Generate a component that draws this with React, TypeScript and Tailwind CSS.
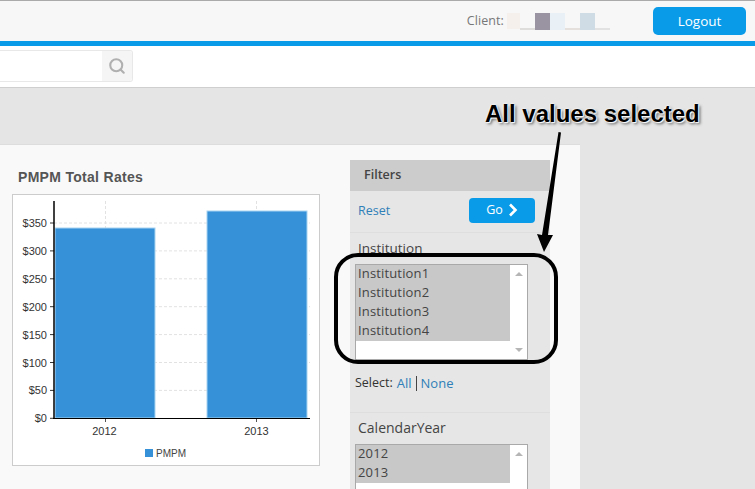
import { Search } from "lucide-react";

const ui = "font-['Open_Sans',sans-serif]";
const ticks = ["$350", "$300", "$250", "$200", "$150", "$100", "$50", "$0"];

function Chart() {
  // svg origin is at page (13,195)
  return (
    <svg width="306" height="270" className="block font-['Liberation_Sans',sans-serif]">
      {ticks.map((t, i) => {
        const y = 28 + i * 27.9;
        return (
          <g key={t}>
            {i < 7 && <line x1="41" x2="297" y1={y} y2={y} stroke="#e2e2e2" strokeDasharray="3 2" />}
            <line x1="37" x2="41" y1={y} y2={y} stroke="#333" />
            <text x="34" y={y + 4} textAnchor="end" fontSize="11" fill="#333">{t}</text>
          </g>
        );
      })}
      <line x1="92.5" x2="92.5" y1="6" y2="223" stroke="#e2e2e2" strokeDasharray="3 2" />
      <line x1="243.5" x2="243.5" y1="6" y2="223" stroke="#e2e2e2" strokeDasharray="3 2" />
      <rect x="42" y="33" width="100" height="190" fill="#3691d8" stroke="#a8d4f2" strokeWidth="1" />
      <rect x="194" y="16" width="100" height="207" fill="#3691d8" stroke="#a8d4f2" strokeWidth="1" />
      <line x1="41" x2="41" y1="6" y2="224" stroke="#000" strokeWidth="1.5" />
      <line x1="40" x2="297" y1="223.5" y2="223.5" stroke="#000" />
      <line x1="92.5" x2="92.5" y1="224" y2="227" stroke="#555" />
      <line x1="243.5" x2="243.5" y1="224" y2="227" stroke="#555" />
      <text x="91.5" y="240" textAnchor="middle" fontSize="11" fill="#333">2012</text>
      <text x="243.5" y="240" textAnchor="middle" fontSize="11" fill="#333">2013</text>
      <rect x="132" y="254" width="8" height="8" fill="#3691d8" />
      <text x="143" y="262" fontSize="10" fill="#444">PMPM</text>
    </svg>
  );
}

function Listbox({ items, height }: { items: string[]; height: string }) {
  return (
    <div className={`flex ${height} w-[173px] border border-[#a9a9a9] bg-white`}>
      <div className="flex-1">
        {items.map((item) => (
          <div key={item} className={`h-[19px] bg-[#c8c8c8] pb-[2px] pl-[2px] text-[13px] leading-[17px] tracking-[0.15px] text-[#444] ${ui}`}>
            {item}
          </div>
        ))}
      </div>
      <div className="flex w-[17px] flex-col items-center justify-between py-[7px]">
        <span className="h-0 w-0 border-x-[4px] border-b-[4px] border-x-transparent border-b-[#b5b5b5]" />
        <span className="h-0 w-0 border-x-[4px] border-t-[4px] border-x-transparent border-t-[#b5b5b5]" />
      </div>
    </div>
  );
}

function FilterPanel() {
  return (
    <div className={`mt-[15px] w-[200px] bg-[#e6e6e6] ${ui}`}>
      <div className="h-[31px] bg-[#cccccc] pl-[14px] text-[12.5px] font-semibold leading-[29px] text-[#444]">Filters</div>
      <div className="flex h-[42px] items-center justify-between border-b border-[#dedede] pl-[8px] pr-[15px] pb-[3px]">
        <span className="mt-[2px] text-[12.5px] text-[#2f7fb8]">Reset</span>
        <button className="flex h-[25px] w-[66px] items-center justify-center gap-[5px] rounded-[4px] bg-[#0a9be8] text-[12.5px] text-white">
          Go
          <svg width="10" height="14" viewBox="0 0 10 14" fill="none" stroke="#fff" strokeWidth="2.6">
            <path d="M2 1.5 7.5 7 2 12.5" />
          </svg>
        </button>
      </div>
      <div className="h-[180px] border-b border-[#dedede]">
        <div className="pl-[8px] pt-[5px] text-[13.5px] leading-[20px] text-[#444]">Institution</div>
        <div className="ml-[5px] mt-[6px]">
          <Listbox items={["Institution1", "Institution2", "Institution3", "Institution4"]} height="h-[96px]" />
        </div>
        <div className="ml-[5px] mt-[13px] flex items-center text-[12.5px] leading-[20px] text-[#333]">
          Select:
          <span className="ml-[4px] text-[13px] text-[#2f7fb8]">All</span>
          <span className="mx-[4px] h-[15px] w-px bg-[#444]" />
          <span className="text-[13px] text-[#2f7fb8]">None</span>
        </div>
      </div>
      <div className="pl-[8px] pt-[5px] text-[14px] leading-[20px] text-[#444]">CalendarYear</div>
      <div className="ml-[5px] mt-[6px]">
        <Listbox items={["2012", "2013"]} height="h-[96px]" />
      </div>
    </div>
  );
}

export default function App() {
  return (
    <div className="relative h-[489px] w-[755px] overflow-hidden bg-[#e5e5e5]">
      {/* Header */}
      <div className={`flex h-[41px] items-center justify-end border-t border-[#aaaaaa] bg-[#f7f7f7] pr-[9px] ${ui}`}>
        <span className="mr-[3px] text-[12.5px] tracking-[0.1px] text-[#777]">Client:</span>
        <div className="mr-[43px] flex h-[17px] items-start">
          <span className="h-[16px] w-[13px] bg-[#f6f0ec]" />
          <span className="mt-[15px] h-[2px] w-[15px] bg-[#dfdcdc]" />
          <span className="h-[17px] w-[15px] bg-[#9a94a2]" />
          <span className="h-[17px] w-[15px] bg-[#e9f1f6]" />
          <span className="mt-[15px] h-[2px] w-[15px] bg-[#e6e0dc]" />
          <span className="h-[17px] w-[15px] bg-[#cfdce6]" />
          <span className="mt-[15px] h-[2px] w-[15px] bg-[#e2e2e2]" />
        </div>
        <button className="h-[28px] w-[93px] rounded-[5px] bg-[#0a9be8] text-[13.5px] font-medium text-white">Logout</button>
      </div>
      <div className="h-[5px] bg-[#0a9be8]" />

      {/* Search row */}
      <div className="flex h-[42px] items-center border-b border-[#cfcfcf] bg-white pb-[1px]">
        <div className="flex h-[32px] w-[133px] rounded-r-[3px] border border-l-0 border-[#e8e8e8]">
          <div className="flex-1 bg-white" />
          <div className="flex w-[30px] items-center justify-center rounded-r-[3px] bg-[#f5f5f5]">
            <Search size={18} strokeWidth={2.8} className="text-[#b0b0b0]" />
          </div>
        </div>
      </div>

      {/* Content */}
      <div className="mt-[56px] flex h-[401px] w-[580px] border-t border-[#dddddd] bg-[#f9f9f9]">
        <div className="w-[350px] pl-[12px]">
          <h2 className="ml-[6px] mt-[23px] font-['Liberation_Sans',sans-serif] text-[14px] font-bold leading-[18px] tracking-[0.3px] text-[#555]">
            PMPM Total Rates
          </h2>
          <div className="mt-[8px] h-[272px] w-[308px] border border-[#cccccc] bg-white">
            <Chart />
          </div>
        </div>
        <FilterPanel />
      </div>

      {/* Annotation drawn on top of the screenshot */}
      <div className="absolute left-[485px] top-[99px] whitespace-nowrap font-['Liberation_Sans',sans-serif] text-[24px] font-bold leading-[30px] text-black [text-shadow:0_0_2px_#fff,0_0_2px_#fff,1px_1px_1px_#fff,2px_2px_3px_#555]">
        All values selected
      </div>
      <div className="absolute left-[334px] top-[253px] h-[111px] w-[224px] rounded-[24px] border-[4px] border-black" />
      <svg className="absolute left-[530px] top-[128px]" width="40" height="126" viewBox="0 0 40 126">
        <path d="M28.5 4 31 4.5 18 107 23 107 14 124 7 106 12 107Z" fill="#000" />
      </svg>
    </div>
  );
}
